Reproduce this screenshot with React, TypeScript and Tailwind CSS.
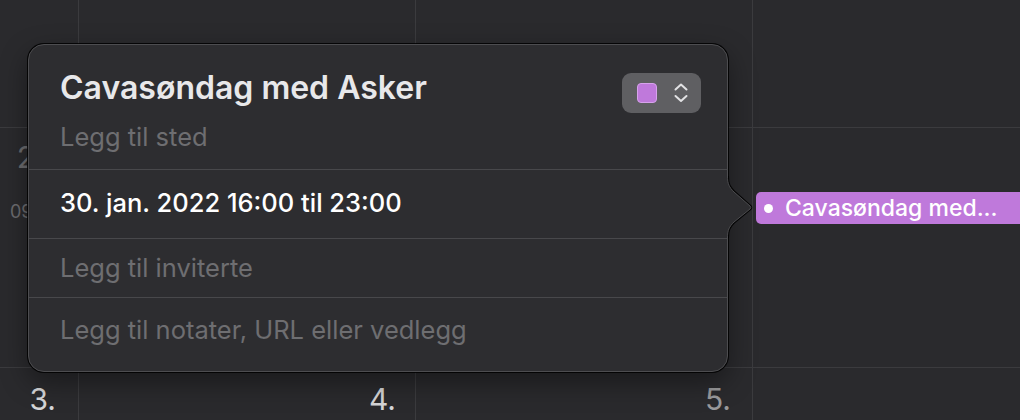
import React from "react";

function Chevrons() {
  return (
    <svg width="16" height="20" viewBox="0 0 16 20" fill="none">
      <path d="M2.5 6.5 L8 1.5 L13.5 6.5" stroke="#e2e2e4" strokeWidth="2" strokeLinecap="round" strokeLinejoin="round" />
      <path d="M2.5 13 L8 18 L13.5 13" stroke="#e2e2e4" strokeWidth="2" strokeLinecap="round" strokeLinejoin="round" />
    </svg>
  );
}

function Arrow() {
  const curve = "M1.5 0 C1.5 8 3 11 8 16 L24 30 Q25.5 31.5 24 33 L8 46 C3 51 1.5 54 1.5 62";
  return (
    <svg width="30" height="62" viewBox="0 0 30 62" className="absolute left-[726px] top-[176px] z-20">
      <path d={curve} stroke="rgba(0,0,0,0.85)" strokeWidth="3" fill="none" />
      <path d={curve + " L0 62 L0 0 Z"} fill="#2d2d30" />
      <path d={curve} stroke="#4d4d50" strokeWidth="1" fill="none" />
    </svg>
  );
}

export default function App() {
  const font = { fontFamily: "Inter, 'Noto Sans', sans-serif" };
  return (
    <div className="relative w-[1020px] h-[420px] overflow-hidden bg-[#3b3b3e]" style={font}>
      <div className="grid h-full w-full grid-cols-[78px_336px_336px_1fr] grid-rows-[127px_239px_1fr] gap-px">
        {/* row 1 */}
        <div className="bg-[#2a2a2d]" />
        <div className="bg-[#2a2a2d]" />
        <div className="bg-[#2a2a2d]" />
        <div className="bg-[#2a2a2d]" />
        {/* row 2 */}
        <div className="flex flex-col bg-[#2a2a2d]">
          <div className="flex justify-end pr-[21px] pt-[12px] text-[30px] leading-[34px] text-[#6c6c6f]">27.</div>
          <div className="mt-[27px] pl-[10px] text-[18px] leading-[22px] text-[#6c6c6f]">09:00</div>
        </div>
        <div className="bg-[#2a2a2d]" />
        <div className="bg-[#2a2a2d]" />
        <div className="bg-[#2a2a2d] pl-[3px] pt-[64px]">
          <div className="flex h-[32px] items-center gap-[12px] rounded-l-[5px] bg-[#bf79db] pl-[8px]">
            <span className="h-[9px] w-[9px] shrink-0 rounded-full bg-white" />
            <span className="whitespace-nowrap text-[23px] font-medium leading-[28px] text-white">Cavasøndag med...</span>
          </div>
        </div>
        {/* row 3 */}
        <div className="flex justify-end bg-[#2a2a2d] pr-[22px] pt-[14px] text-[30px] leading-[34px] text-[#d6d6d8]">3.</div>
        <div className="flex justify-end bg-[#2a2a2d] pr-[19px] pt-[14px] text-[30px] leading-[34px] text-[#d6d6d8]">4.</div>
        <div className="flex justify-end bg-[#2a2a2d] pr-[21px] pt-[14px] text-[30px] leading-[34px] text-[#9a9a9c]">5.</div>
        <div className="bg-[#2a2a2d]" />
      </div>

      {/* popover */}
      <div className="absolute left-[28px] top-[44px] z-10 w-[700px] rounded-[16px] border border-[#4d4d50] bg-[#2d2d30] shadow-[0_0_0_1px_rgba(0,0,0,0.85),0_10px_28px_rgba(0,0,0,0.4)]">
        <div className="flex items-start justify-between pb-[17px] pl-[31px] pr-[26px] pt-[25px]">
          <div className="flex flex-col">
            <div className="text-[32px] font-semibold leading-[36px] text-[#e8e8ea]">Cavasøndag med Asker</div>
            <div className="mt-[16px] text-[25.5px] leading-[30px] text-[#6e6e71]">Legg til sted</div>
          </div>
          <div className="mt-[3px] flex h-[40px] w-[79px] items-center gap-[16px] rounded-[9px] bg-[#5f5f62] pl-[15px]">
            <span className="h-[20px] w-[20px] rounded-[4px] border border-[#d7a2ec] bg-[#bf79db]" />
            <Chevrons />
          </div>
        </div>
        <div className="h-px bg-[#48484b]" />
        <div className="flex h-[68px] items-center pb-[2px] pl-[31px] text-[25.5px] font-medium leading-[30px] text-white">
          30. jan. 2022 16:00 til 23:00
        </div>
        <div className="h-px bg-[#48484b]" />
        <div className="flex h-[58px] items-center pl-[31px] text-[25.5px] leading-[30px] text-[#6e6e71]">Legg til inviterte</div>
        <div className="h-px bg-[#48484b]" />
        <div className="h-[73px] pl-[31px] pt-[17px] text-[25.5px] leading-[30px] text-[#6e6e71]">
          Legg til notater, URL eller vedlegg
        </div>
      </div>
      <Arrow />
    </div>
  );
}
